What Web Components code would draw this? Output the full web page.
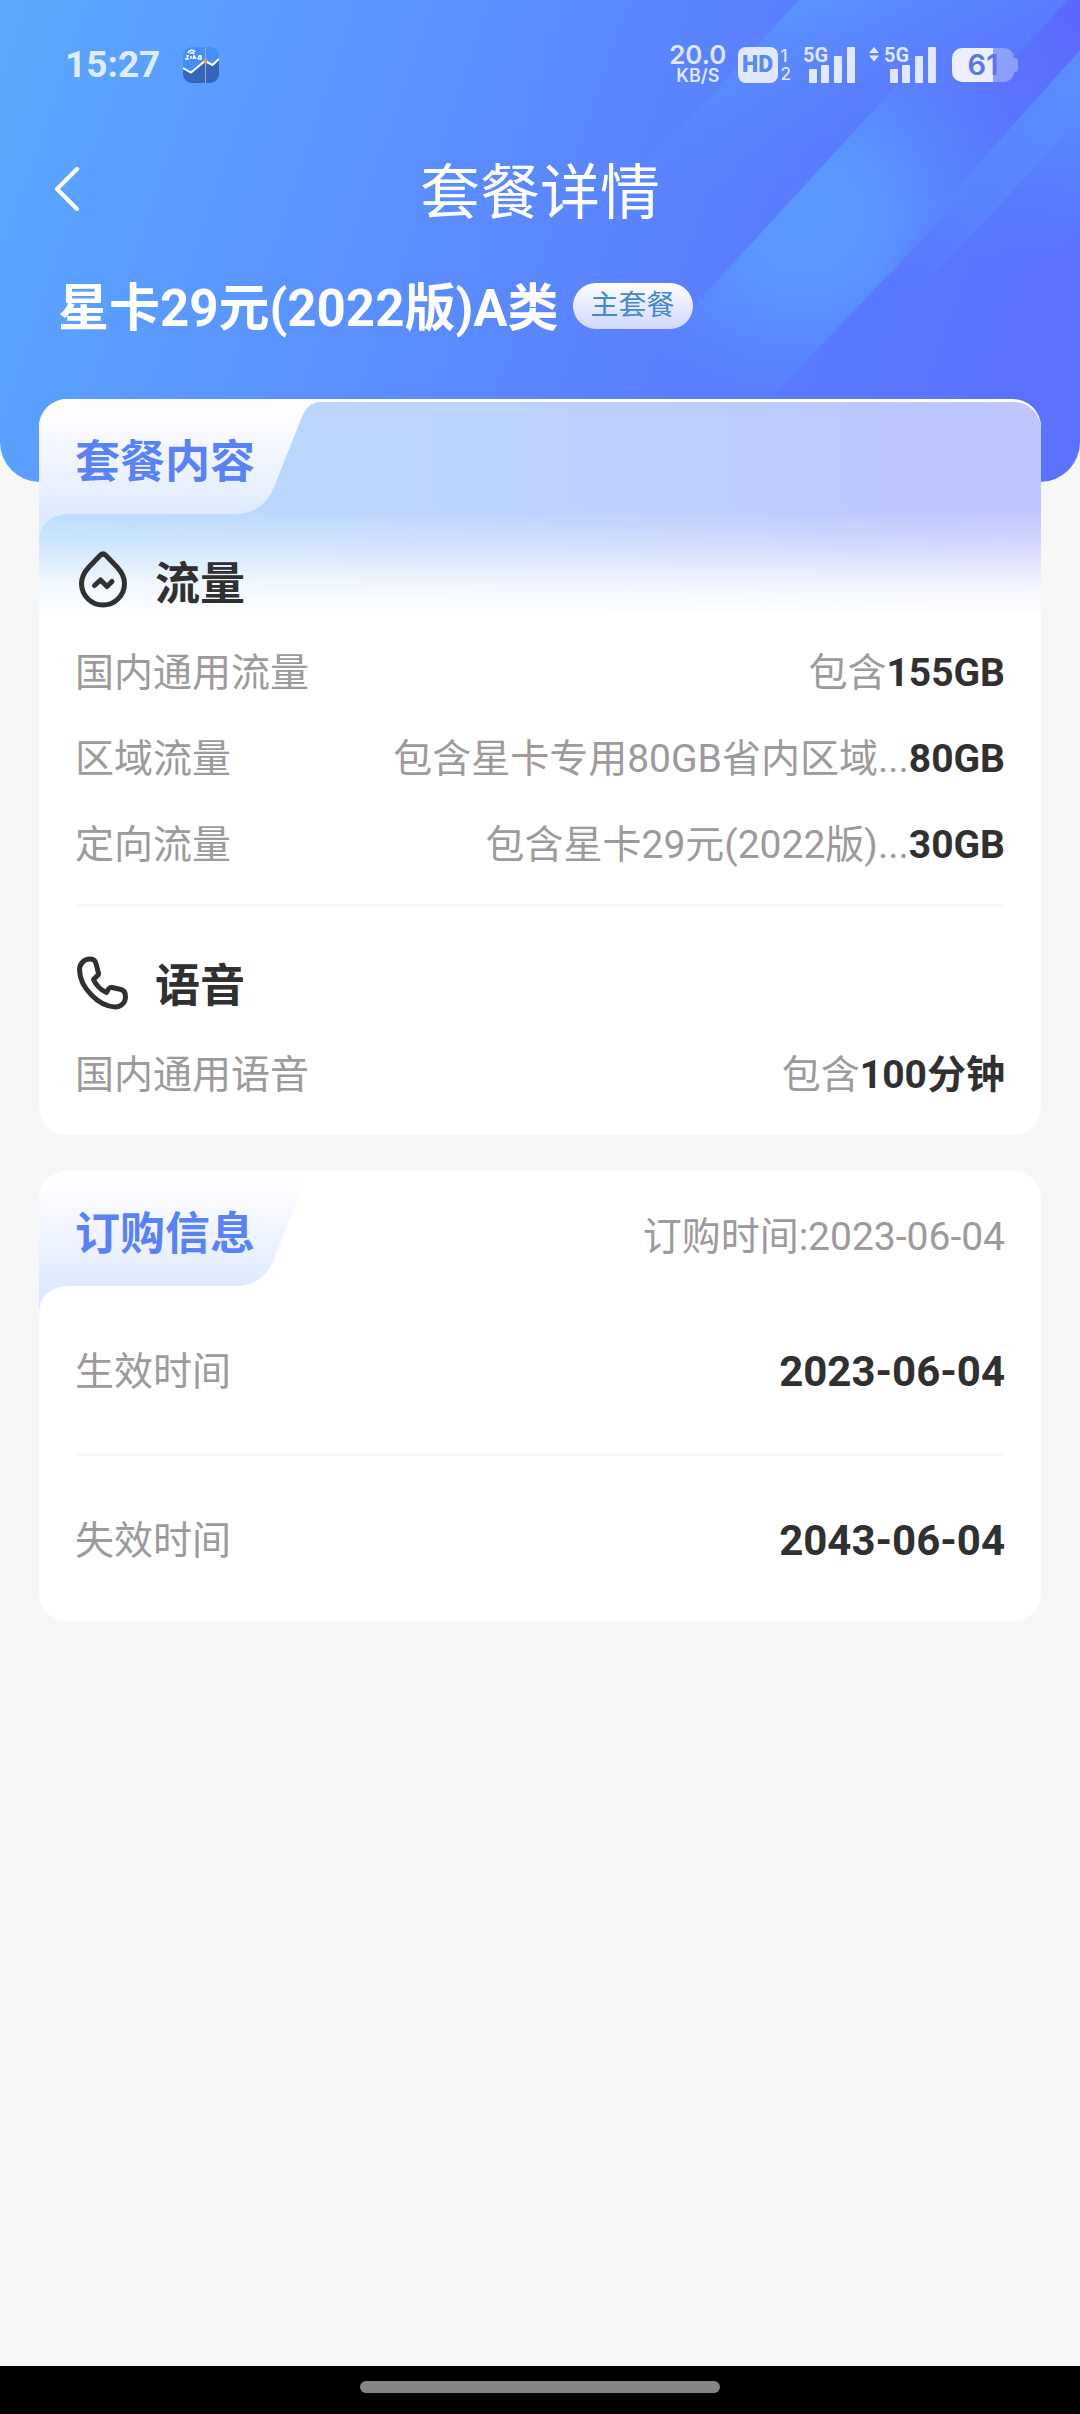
<!DOCTYPE html>
<html lang="zh-CN">
<head>
<meta charset="utf-8">
<meta name="viewport" content="width=device-width, initial-scale=1">
<title>套餐详情</title>
<style>
  body {
    margin: 0;
    min-height: 100vh;
    display: flex;
    flex-direction: column;
    background: #f7f7f7;
    color: #303030;
    font-family: Roboto, "Noto Sans CJK SC", sans-serif;
  }
  main {
    display: flex;
    flex-direction: column;
    gap: 36px;
    margin: -83px 39px 36px;
    position: relative;
  }
  gesture-bar {
    margin-top: auto;
  }
</style>
</head>
<body>
<page-hero>
  <status-bar time="15:27" speed="20.0" battery="61"></status-bar>
  <nav-bar>套餐详情</nav-bar>
  <plan-name tag="主套餐">星卡29元(2022版)A类</plan-name>
</page-hero>

<main>
  <info-card heading="套餐内容" tinted>
    <usage-group heading="流量" icon="data">
      <usage-row label="国内通用流量" note="包含">155GB</usage-row>
      <usage-row label="区域流量" note="包含星卡专用80GB省内区域...">80GB</usage-row>
      <usage-row label="定向流量" note="包含星卡29元(2022版)...">30GB</usage-row>
    </usage-group>
    <usage-group heading="语音" icon="phone">
      <usage-row label="国内通用语音" note="包含">100分钟</usage-row>
    </usage-group>
  </info-card>

  <info-card heading="订购信息">
    <span slot="extra">订购时间:2023-06-04</span>
    <date-row label="生效时间">2023-06-04</date-row>
    <date-row label="失效时间">2043-06-04</date-row>
  </info-card>
</main>

<gesture-bar></gesture-bar>

<script>
(() => {

  const icons = {
    data: `
      <svg viewBox="-1 3 54 58" width="54" height="58" fill="none" stroke="#303030" stroke-width="5" stroke-linecap="round" stroke-linejoin="round">
        <path d="M24 5.500Q27 2.500 30 5.500L41 17C46 22.500 48.500 27 48.500 33.500A21.500 21.500 0 0 1 5.500 33.500C5.500 27 8 22.500 13 17Z"/>
        <path d="M18.500 35.500L24.500 30L31 36.500L36 31.500"/>
      </svg>`,
    phone: `
      <svg viewBox="0 1 54 58" width="54" height="58" fill="none" stroke="#303030" stroke-width="5" stroke-linecap="round" stroke-linejoin="round">
        <path d="M16 5C8.500 4.500 4.500 10.500 4.500 16C5 34 24 52.500 40 53C46.500 53 50.500 48 50.500 43C50.500 38.500 48.500 35.500 44 35L37 33.500C34.500 33 34 34 33 36L31.500 38.500C25.500 36 20.500 30 18.500 25.500L22 22C24 20.500 24 20 23 17.500L21 9.500C20 6.500 19 5 16 5Z"/>
      </svg>`
  }

  const bars = `
    <svg viewBox="0 0 52 38" width="52" height="38" fill="currentColor">
      <rect x="6" y="23" width="8" height="14" rx="1"/>
      <rect x="18" y="19" width="8" height="18" rx="1"/>
      <rect x="31" y="10" width="8" height="27" rx="1"/>
      <rect x="44" y="1" width="8" height="36" rx="1"/>
    </svg>`

  class BaseElement extends HTMLElement {
    constructor() {
      super()
      this.attachShadow({ mode: 'open' })
    }

    connectedCallback() {
      this.shadowRoot.innerHTML = this.render()
    }

    attr(name) {
      return this.getAttribute(name) || ''
    }
  }

  class PageHero extends BaseElement {
    render() {
      return `
      <style>
        :host {
          display: block;
          position: relative;
          overflow: hidden;
          padding-bottom: 122px;
          border-radius: 0 0 40px 40px;
          color: #fff;
        }
        .art {
          position: absolute;
          inset: 0;
          width: 100%;
          height: 100%;
        }
        .content {
          position: relative;
        }
      </style>
      <svg class="art" viewBox="0 0 1080 482" preserveAspectRatio="none" aria-hidden="true">
        <defs>
          <linearGradient id="base" gradientUnits="userSpaceOnUse" x1="0" y1="60" x2="1000" y2="400">
            <stop offset="0" stop-color="#5aa8ff"/>
            <stop offset=".5" stop-color="#5a8aff"/>
            <stop offset=".75" stop-color="#5a7cff"/>
            <stop offset="1" stop-color="#5a72ff"/>
          </linearGradient>
          <linearGradient id="a" gradientUnits="userSpaceOnUse" x1="800" y1="0" x2="860" y2="150">
            <stop offset="0" stop-color="#5a92ff"/>
            <stop offset="1" stop-color="#5a80ff" stop-opacity="0"/>
          </linearGradient>
          <radialGradient id="b" gradientUnits="userSpaceOnUse" cx="805" cy="215" r="240">
            <stop offset="0" stop-color="#5a9aff"/>
            <stop offset=".3" stop-color="#5a95ff"/>
            <stop offset=".65" stop-color="#5a88ff" stop-opacity=".65"/>
            <stop offset="1" stop-color="#5a7aff" stop-opacity="0"/>
          </radialGradient>
          <linearGradient id="c" gradientUnits="userSpaceOnUse" x1="1080" y1="80" x2="900" y2="300">
            <stop offset="0" stop-color="#5a8cff"/>
            <stop offset=".6" stop-color="#5a86ff" stop-opacity=".8"/>
            <stop offset="1" stop-color="#5a7cff" stop-opacity="0"/>
          </linearGradient>
          <linearGradient id="d" gradientUnits="userSpaceOnUse" x1="1080" y1="130" x2="1030" y2="300">
            <stop offset="0" stop-color="#5a88ff"/>
            <stop offset="1" stop-color="#5a76ff" stop-opacity="0"/>
          </linearGradient>
          <linearGradient id="e" gradientUnits="userSpaceOnUse" x1="1080" y1="30" x2="960" y2="130">
            <stop offset="0" stop-color="#5a6aff"/>
            <stop offset="1" stop-color="#5a74ff" stop-opacity="0"/>
          </linearGradient>
        </defs>
        <rect width="1080" height="482" fill="url(#base)"/>
        <path d="M799 0H1080L860 180H632Z" fill="url(#a)"/>
        <path d="M1067 0H1080V50L955 190L900 190Z" fill="url(#e)"/>
        <path d="M975 0L580 430L740 430L955 205L1080 50V0Z" fill="url(#b)"/>
        <path d="M1080 50L860 297L910 300L1080 120Z" fill="url(#c)"/>
        <path d="M1080 120V228L1010 305L910 300Z" fill="url(#d)"/>
      </svg>
      <div class="content"><slot></slot></div>
      `
    }
  }
  customElements.define('page-hero', PageHero)

  class StatusBar extends BaseElement {
    render() {
      return `
      <style>
        :host {
          display: flex;
          align-items: center;
          justify-content: space-between;
          box-sizing: border-box;
          height: 130px;
          padding: 0 62px 0 65px;
          color: rgba(255, 255, 255, .82);
          font-weight: 500;
        }
        svg {
          display: block;
        }
        .left, .right, .hd {
          display: flex;
          align-items: center;
        }
        .left {
          gap: 23px;
        }
        .time {
          font-size: 37px;
          font-weight: 700;
          line-height: 44px;
        }
        .speed {
          display: grid;
          justify-items: center;
          margin-right: 11px;
          font-family: Inter, sans-serif;
          font-size: 26px;
          font-weight: 600;
          line-height: 22px;
        }
        .speed small {
          font-size: 18px;
          line-height: 20px;
        }
        .hd {
          gap: 3px;
          margin-right: 12px;
        }
        .hd b {
          width: 40px;
          border-radius: 8px;
          background: currentColor;
          font-size: 23px;
          font-weight: 900;
          line-height: 36px;
          text-align: center;
        }
        .hd b span {
          color: #5a88f4;
        }
        .sims {
          display: grid;
          font-family: Inter, sans-serif;
          font-size: 17px;
          line-height: 18px;
        }
        .net {
          display: grid;
        }
        .net > * {
          grid-area: 1 / 1;
        }
        .net span {
          font-size: 20px;
          font-weight: 700;
          line-height: 18px;
        }
        .arrows {
          margin: 0 5px 0 14px;
          align-self: flex-start;
        }
        .right {
          height: 38px;
        }
        .battery {
          display: flex;
          align-items: center;
          margin-left: 16px;
        }
        .level {
          width: 62px;
          border-radius: 10px;
          background: linear-gradient(90deg, rgba(255, 255, 255, .88) 66%, rgba(255, 255, 255, .3) 66%);
          color: #5a74ee;
          font-family: Inter, sans-serif;
          font-size: 29px;
          font-weight: 600;
          line-height: 34px;
          text-align: center;
        }
        .nub {
          width: 4px;
          height: 14px;
          border-radius: 0 3px 3px 0;
          background: rgba(255, 255, 255, .3);
        }
      </style>
      <div class="left">
        <span class="time">${this.attr('time')}</span>
        <svg viewBox="0 0 36 36" width="36" height="36" aria-hidden="true">
          <rect width="36" height="36" rx="9" fill="#4490f8"/>
          <path d="M0 22L8 26L22 14L30 19L36 12V27A9 9 0 0 1 27 36H9A9 9 0 0 1 0 27Z" fill="#3366bd"/>
          <path d="M0 21L8 25.500L22 14L29.500 18L36 12" fill="none" stroke="#fff" stroke-width="2"/>
          <path d="M22.500 0V36" stroke="#a9aeb4"/>
          <circle cx="22.500" cy="14" r="2" fill="#e0a23c"/>
          <path d="M5 6C6 3 10 2 12 5M7 7C8 5 10 5 11 7M2 12H5L4 9H6M8 12V9M10 12L11 9L13 12M15 12L16 9H18V12H15" fill="none" stroke="#fff" stroke-width="1.500"/>
        </svg>
      </div>
      <div class="right">
        <div class="speed"><span>${this.attr('speed')}</span><small>KB/S</small></div>
        <div class="hd">
          <b><span>HD</span></b>
          <div class="sims"><span>1</span><span>2</span></div>
        </div>
        <div class="net"><span>5G</span>${bars}</div>
        <svg class="arrows" viewBox="0 0 10 16" width="10" height="16" fill="currentColor" aria-hidden="true">
          <path d="M0 7L5 1L10 7ZM0 9.500H10L5 15.500Z"/>
        </svg>
        <div class="net"><span>5G</span>${bars}</div>
        <div class="battery"><div class="level">${this.attr('battery')}</div><div class="nub"></div></div>
      </div>
      `
    }
  }
  customElements.define('status-bar', StatusBar)

  class NavBar extends BaseElement {
    render() {
      return `
      <style>
        :host {
          display: grid;
          grid-template-columns: 1fr auto 1fr;
          align-items: center;
          height: 122px;
          padding: 0 40px;
        }
        button {
          justify-self: start;
          display: flex;
          padding: 12px;
          border: 0;
          background: none;
          color: inherit;
        }
        h1 {
          margin: 0;
          padding-top: 6px;
          font-size: 60px;
          font-weight: 400;
          line-height: 80px;
        }
      </style>
      <button type="button" aria-label="返回">
        <svg viewBox="0 1 30 48" width="30" height="48" fill="none" stroke="currentColor" stroke-width="4" stroke-linecap="round" stroke-linejoin="round">
          <path d="M25 3L5 23L25 43"/>
        </svg>
      </button>
      <h1><slot></slot></h1>
      `
    }
  }
  customElements.define('nav-bar', NavBar)

  class PlanName extends BaseElement {
    render() {
      return `
      <style>
        :host {
          display: flex;
          align-items: center;
          gap: 14px;
          height: 108px;
          padding: 0 58px;
        }
        h2 {
          margin: 0;
          padding-top: 6px;
          font-size: 51px;
          font-weight: 700;
          line-height: 70px;
        }
        .tag {
          padding: 0 18px;
          border-radius: 24px;
          background: linear-gradient(#fff, #d0d8ff);
          color: #4488d0;
          font-size: 28px;
          line-height: 46px;
        }
      </style>
      <h2><slot></slot></h2>
      <span class="tag">${this.attr('tag')}</span>
      `
    }
  }
  customElements.define('plan-name', PlanName)

  class InfoCard extends BaseElement {
    render() {
      return `
      <style>
        :host {
          display: block;
          position: relative;
          overflow: hidden;
          border-radius: 28px;
          background: #fff;
        }
        .tint {
          display: none;
          position: absolute;
          inset: 3px 0 auto;
          height: 214px;
          border-radius: 27px 27px 0 0;
          background:
            linear-gradient(transparent 50%, rgba(255, 255, 255, .3) 66%, rgba(255, 255, 255, .8) 85%, #fff),
            linear-gradient(90deg, #b8dcff, #bcd6ff 30%, #bccfff 60%, #bcc8ff 85%, #c0c6ff);
        }
        :host([tinted]) .tint {
          display: block;
        }
        .tab {
          position: absolute;
          top: 0;
          left: 0;
        }
        header {
          position: relative;
          display: flex;
          align-items: center;
          justify-content: space-between;
          height: 115px;
          padding: 0 36px;
        }
        h3 {
          margin: 0;
          padding-top: 12px;
          color: #5a82f8;
          font-size: 45px;
          font-weight: 700;
          line-height: 60px;
        }
        .extra {
          padding-top: 16px;
          color: #9c9a9b;
          font-size: 39px;
          line-height: 54px;
        }
        .body {
          position: relative;
          padding: 0 36px;
        }
      </style>
      <div class="tint"></div>
      <svg class="tab" viewBox="0 0 300 145" width="300" height="145" aria-hidden="true">
        <defs>
          <linearGradient id="tab" x1="0" y1="0" x2="0" y2="1">
            <stop offset="0" stop-color="#fff"/>
            <stop offset=".15" stop-color="#fdfcff"/>
            <stop offset=".8" stop-color="#dfeaff"/>
            <stop offset="1" stop-color="#dbe8ff"/>
          </linearGradient>
        </defs>
        <path d="M0 0H280V3Q268 4 262 20L235 88Q224 115 196 115H28Q0 117 0 145Z" fill="url(#tab)"/>
      </svg>
      <header>
        <h3>${this.attr('heading')}</h3>
        <div class="extra"><slot name="extra"></slot></div>
      </header>
      <div class="body"><slot></slot></div>
      `
    }
  }
  customElements.define('info-card', InfoCard)

  class UsageGroup extends BaseElement {
    render() {
      return `
      <style>
        :host {
          display: block;
          padding: 21px 0 17px;
        }
        :host(:not(:first-of-type)) {
          border-top: 3px solid #f7f7f7;
          padding: 30px 0 18px;
        }
        h4 {
          display: flex;
          align-items: center;
          gap: 26px;
          height: 94px;
          margin: 0;
          font-size: 45px;
          font-weight: 700;
          line-height: 60px;
        }
        h4 svg {
          overflow: visible;
        }
        h4 span {
          padding-top: 6px;
        }
      </style>
      <h4>${icons[this.attr('icon')]}<span>${this.attr('heading')}</span></h4>
      <slot></slot>
      `
    }
  }
  customElements.define('usage-group', UsageGroup)

  class UsageRow extends BaseElement {
    render() {
      return `
      <style>
        :host {
          display: flex;
          align-items: center;
          justify-content: space-between;
          box-sizing: border-box;
          height: 86px;
          padding-top: 2px;
          color: #9c9a9b;
          font-size: 39px;
          line-height: 54px;
        }
        b {
          color: #303030;
        }
      </style>
      <span>${this.attr('label')}</span>
      <span>${this.attr('note')}<b><slot></slot></b></span>
      `
    }
  }
  customElements.define('usage-row', UsageRow)

  class DateRow extends BaseElement {
    render() {
      return `
      <style>
        :host {
          display: flex;
          align-items: center;
          justify-content: space-between;
          box-sizing: border-box;
          height: 165px;
          padding-top: 4px;
          color: #9c9a9b;
          font-size: 39px;
          line-height: 54px;
        }
        :host(:not(:last-of-type)) {
          height: 170px;
          border-bottom: 3px solid #f7f7f7;
        }
        time {
          color: #303030;
          font-size: 42px;
          font-weight: 700;
        }
      </style>
      <span>${this.attr('label')}</span>
      <time><slot></slot></time>
      `
    }
  }
  customElements.define('date-row', DateRow)

  class GestureBar extends BaseElement {
    render() {
      return `
      <style>
        :host {
          display: grid;
          grid-template-columns: 1fr 1fr 1fr;
          padding: 15px 0 21px;
          background: #000;
        }
        div {
          grid-column: 2;
          height: 12px;
          border-radius: 6px;
          background: #858386;
        }
      </style>
      <div></div>
      `
    }
  }
  customElements.define('gesture-bar', GestureBar)
})()
</script>
</body>
</html>
